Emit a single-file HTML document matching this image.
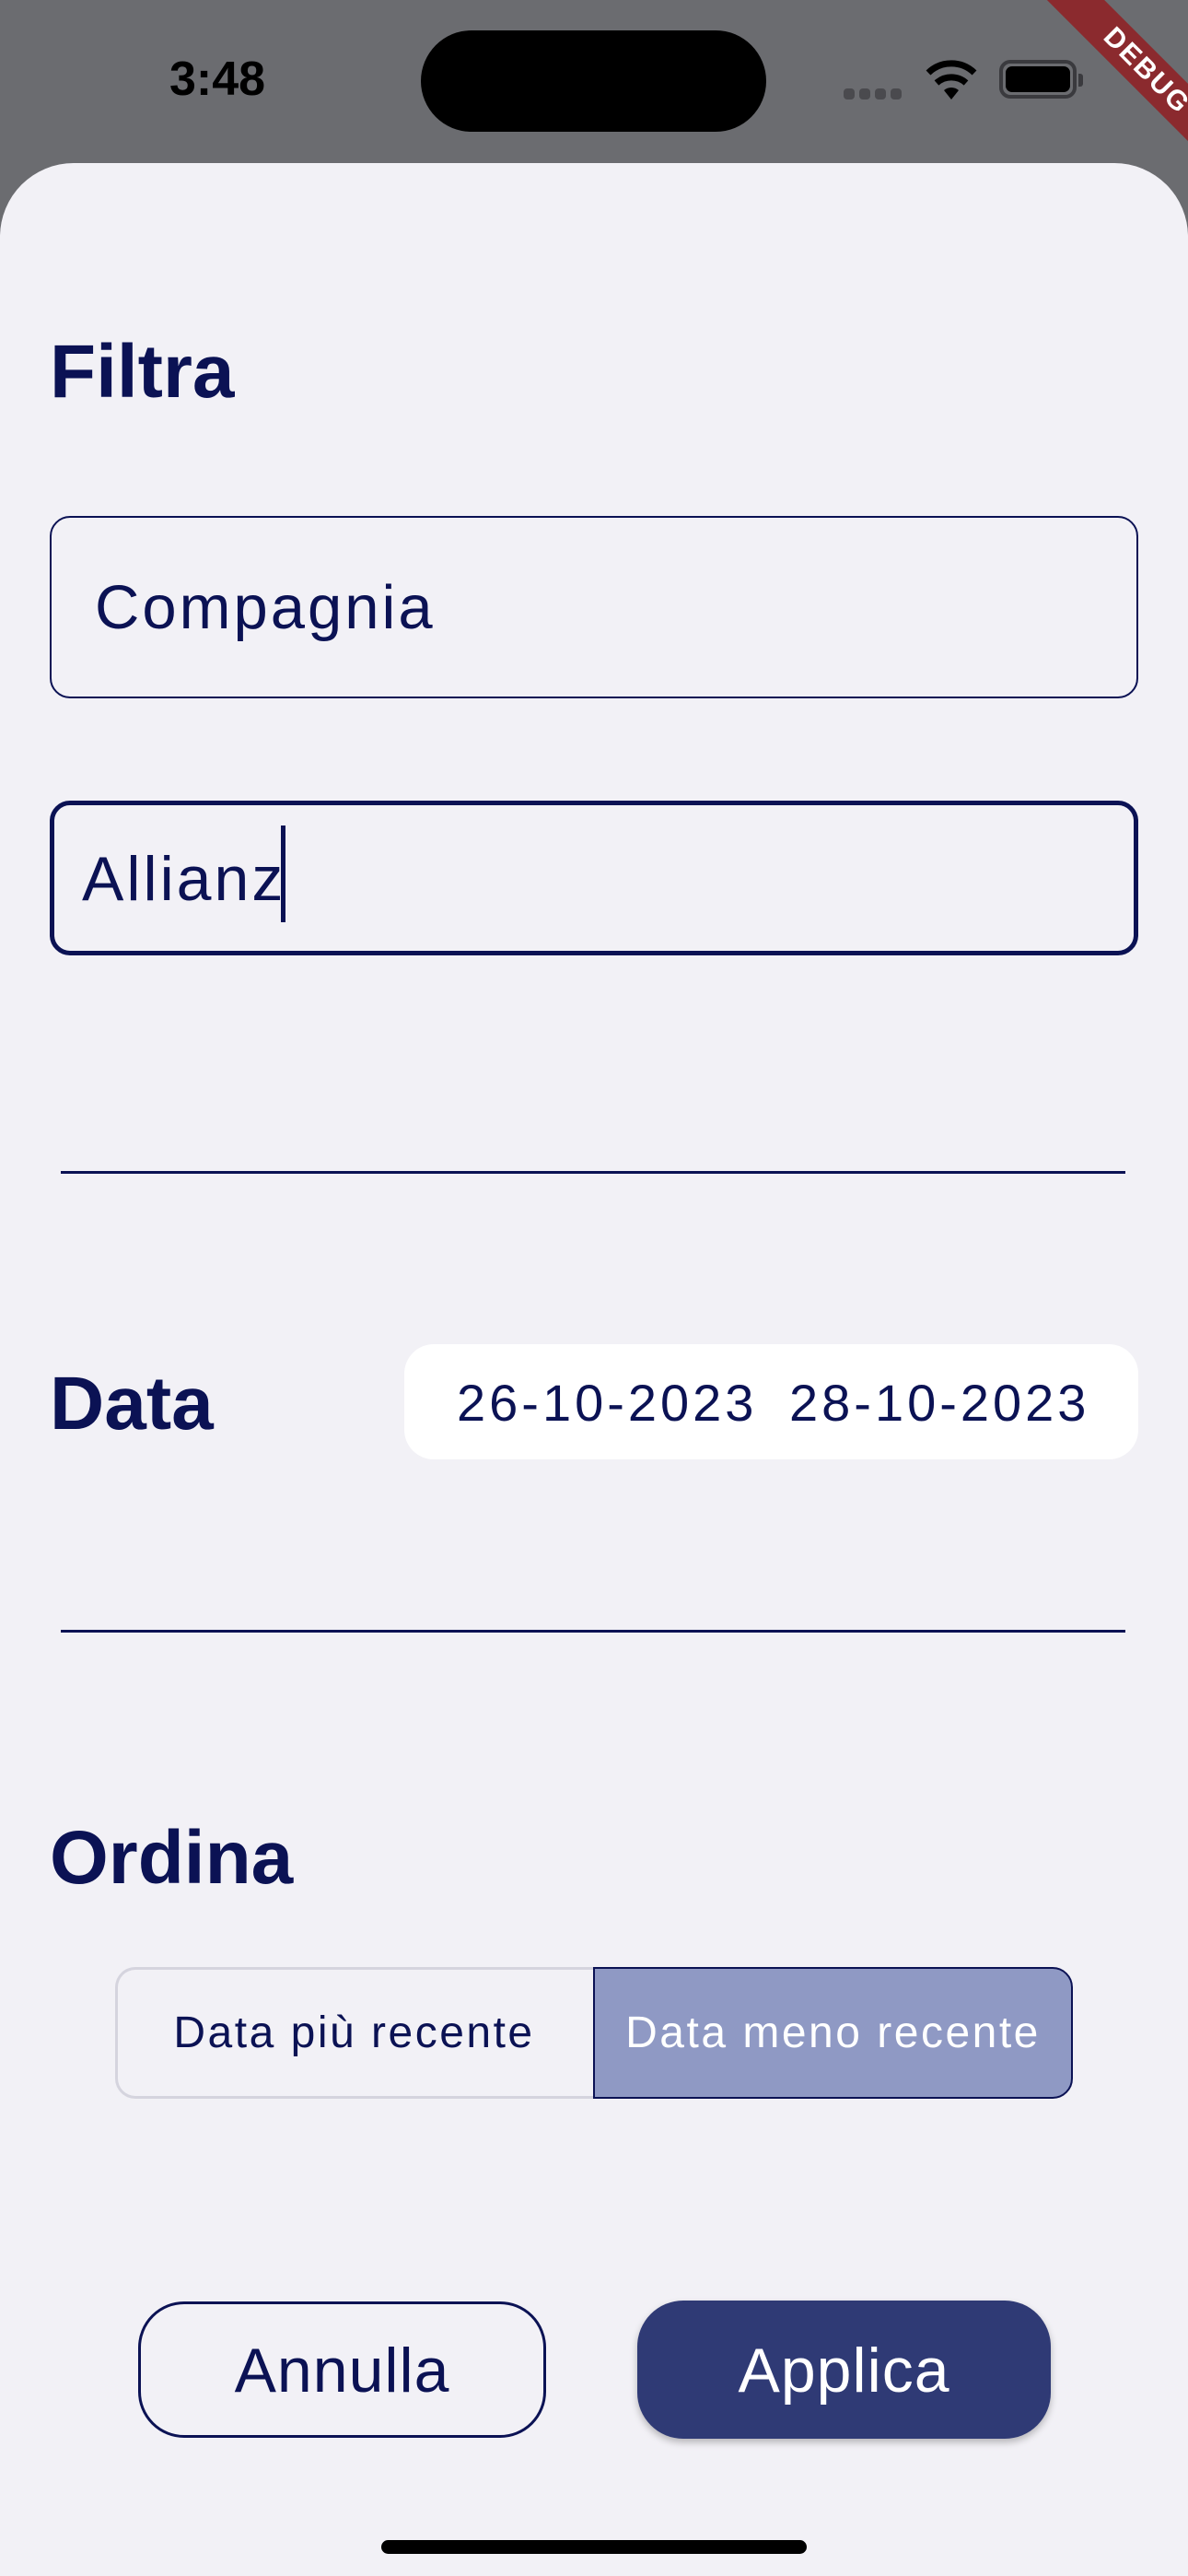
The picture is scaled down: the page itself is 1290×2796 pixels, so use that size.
<!DOCTYPE html>
<html><head><meta charset="utf-8"><style>
*{margin:0;padding:0;box-sizing:border-box}
html,body{width:1290px;height:2796px;overflow:hidden;background:#6b6c70;font-family:"Liberation Sans",sans-serif}
.abs{position:absolute}
.sheet{position:absolute;left:0;top:177px;width:1290px;height:2619px;background:#f2f1f6;border-radius:80px 80px 0 0}
.navy{color:#0b1254}
h2{position:absolute;font-size:82px;font-weight:bold;color:#0b1254;line-height:1}
.line{position:absolute;left:66px;width:1156px;height:3px;background:#0b1254}
</style></head><body>
<div class="abs" style="left:184px;top:58px;font-size:52px;font-weight:bold;color:#000;line-height:56px">3:48</div>
<div class="abs" style="left:457px;top:33px;width:375px;height:110px;background:#000;border-radius:55px"></div>
<div class="abs" style="left:916px;top:96px;width:12px;height:12px;background:#4a4a4e;border-radius:4px"></div>
<div class="abs" style="left:933px;top:96px;width:12px;height:12px;background:#4a4a4e;border-radius:4px"></div>
<div class="abs" style="left:950px;top:96px;width:12px;height:12px;background:#4a4a4e;border-radius:4px"></div>
<div class="abs" style="left:967px;top:96px;width:12px;height:12px;background:#4a4a4e;border-radius:4px"></div>
<svg class="abs" style="left:1003px;top:64px" width="60" height="44" viewBox="0 0 60 44"><path d="M30 44 L22 34 A12 12 0 0 1 38 34 Z" fill="#000"/><path d="M14 26 A24 24 0 0 1 46 26" stroke="#000" stroke-width="7" fill="none"/><path d="M5 15 A36 36 0 0 1 55 15" stroke="#000" stroke-width="7" fill="none"/></svg>
<div class="abs" style="left:1085px;top:65px;width:84px;height:42px;border:4px solid #3a3a3e;border-radius:12px"></div>
<div class="abs" style="left:1092px;top:72px;width:70px;height:28px;background:#000;border-radius:7px"></div>
<div class="abs" style="left:1171px;top:80px;width:5px;height:14px;background:#3a3a3e;border-radius:0 3px 3px 0"></div>
<div class="abs" style="left:1080px;top:55px;width:330px;height:44px;background:#8b2a2e;transform:rotate(45deg);color:#fff;font-weight:bold;font-size:30px;text-align:center;line-height:44px;letter-spacing:2px">DEBUG</div>

<div class="sheet"></div>
<h2 style="left:54px;top:363px">Filtra</h2>
<div class="abs" style="left:54px;top:560px;width:1182px;height:198px;border:2.5px solid #0b1254;border-radius:22px"></div>
<div class="abs navy" style="left:103px;top:620px;font-size:67px;line-height:80px;letter-spacing:3px">Compagnia</div>
<div class="abs" style="left:54px;top:869px;width:1182px;height:168px;border:5px solid #0b1254;border-radius:22px"></div>
<div class="abs navy" style="left:89px;top:914px;font-size:68px;line-height:80px;letter-spacing:3px">Allianz</div>
<div class="abs" style="left:305px;top:896px;width:5px;height:105px;background:#0b1254"></div>
<div class="line" style="top:1271px"></div>
<h2 style="left:54px;top:1483px">Data</h2>
<div class="abs" style="left:439px;top:1459px;width:797px;height:125px;background:#fff;border-radius:32px"></div>
<div class="abs navy" style="left:496px;top:1494px;font-size:56px;line-height:58px;letter-spacing:4px;white-space:pre">26-10-2023</div>
<div class="abs navy" style="left:857px;top:1494px;font-size:56px;line-height:58px;letter-spacing:4px;white-space:pre">28-10-2023</div>
<div class="line" style="top:1769px"></div>
<h2 style="left:54px;top:1976px">Ordina</h2>
<div class="abs" style="left:125px;top:2135px;width:522px;height:143px;border:3px solid #d5d4de;border-right:none;border-radius:22px 0 0 22px"></div>
<div class="abs" style="left:644px;top:2135px;width:521px;height:143px;background:#8f99c4;border:2.5px solid #0b1254;border-radius:0 22px 22px 0"></div>
<div class="abs navy" style="left:125px;top:2180px;width:519px;text-align:center;font-size:48px;line-height:54px;letter-spacing:2.5px">Data più recente</div>
<div class="abs" style="left:644px;top:2180px;width:521px;text-align:center;font-size:48px;line-height:54px;letter-spacing:2.5px;color:#fff">Data meno recente</div>
<div class="abs" style="left:150px;top:2498px;width:443px;height:148px;border:3px solid #0b1254;border-radius:50px"></div>
<div class="abs navy" style="left:150px;top:2535px;width:443px;text-align:center;font-size:68px;line-height:76px;letter-spacing:1px">Annulla</div>
<div class="abs" style="left:692px;top:2497px;width:449px;height:150px;background:#2f3a75;border-radius:50px;box-shadow:0 4px 8px rgba(0,0,0,.25)"></div>
<div class="abs" style="left:692px;top:2535px;width:449px;text-align:center;font-size:68px;line-height:76px;color:#fff;letter-spacing:1px">Applica</div>
<div class="abs" style="left:414px;top:2757px;width:462px;height:15px;background:#000;border-radius:8px"></div>
</body></html>
